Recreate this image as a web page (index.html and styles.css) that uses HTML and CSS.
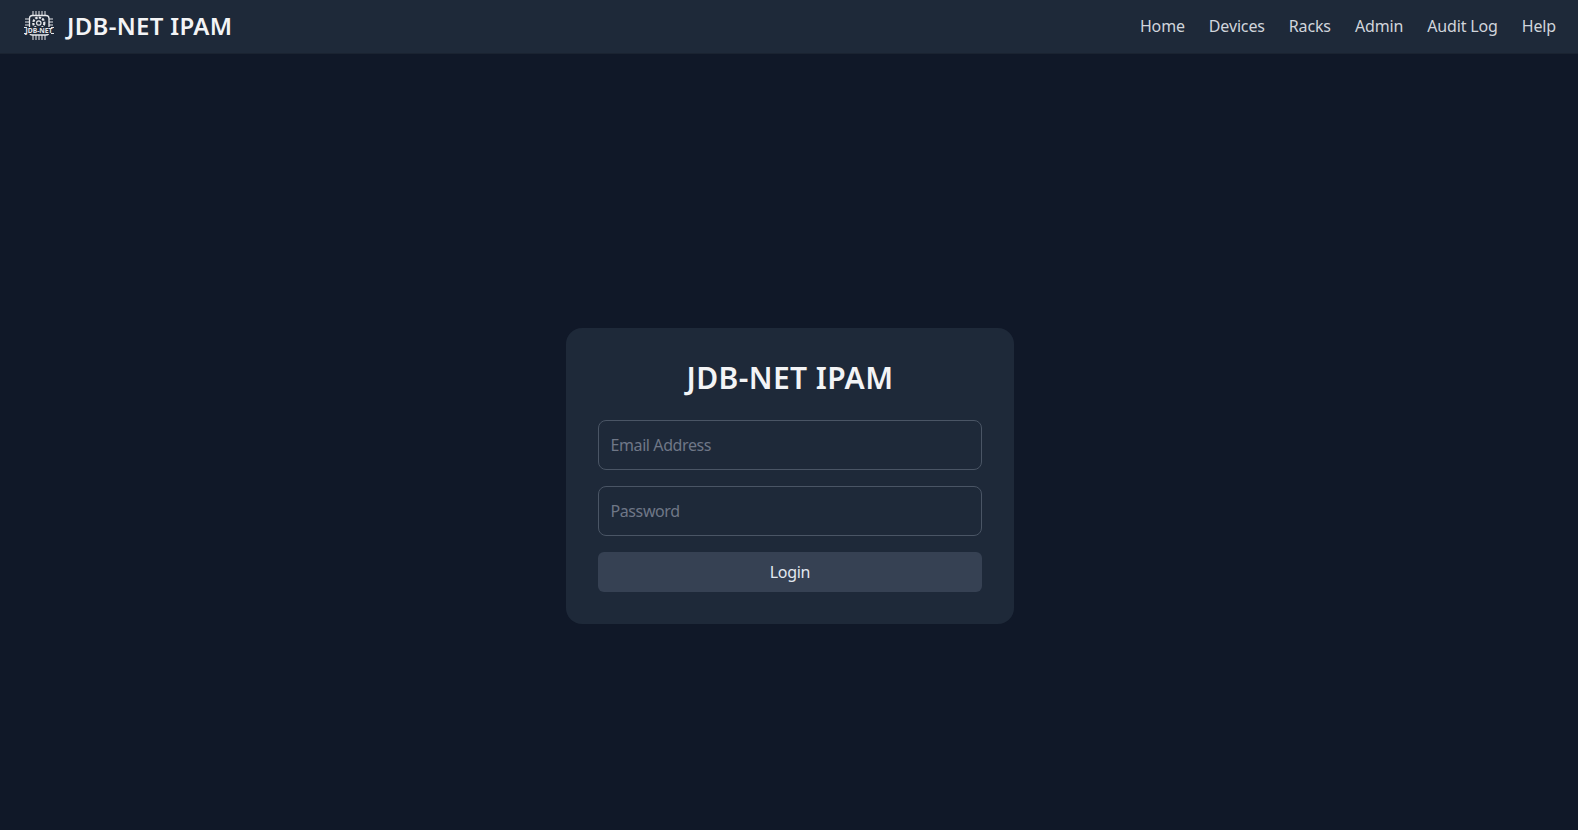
FILE: index.html
```html
<!DOCTYPE html>
<html lang="en">
<head>
<meta charset="utf-8">
<title>JDB-NET IPAM</title>
<link rel="stylesheet" href="styles.css">
</head>
<body>
<nav class="navbar">
  <a class="brand" href="#">
    <svg class="logo" viewBox="0 0 32 32" fill="none" stroke="#e5e7eb">
      <path stroke-width="1" d="M10 1v4.500M13 1v4.500M16 1v4.500M19 1v4.500M22 1v4.500M10 25v5M13 25v5M16 25v5M19 25v5M22 25v5M2 9h4.500M2 12h4.500M2 15h4.500M26 9h4M26 12h4M26 15h4"/>
      <rect x="6.500" y="5.500" width="19.500" height="19.500" rx="3" stroke-width="1.300"/>
      <circle cx="15.800" cy="13" r="5.500" stroke-width="2.200" stroke-dasharray="2.400 1.200"/>
      <circle cx="15.800" cy="13" r="2.200" stroke-width="1.200"/>
      <rect x="1" y="17" width="30" height="7" fill="#1e2939" stroke="none"/>
      <path stroke-width="1" d="M1 17.500h3M1 23.500h3M28 17.500h3M28 23.500h3"/>
      <text class="logo-text" x="16" y="23" text-anchor="middle" textLength="27" lengthAdjust="spacingAndGlyphs">JDB-NET</text>
    </svg>
    <span class="brand-name">JDB-NET IPAM</span>
  </a>
  <div class="nav-links">
    <a href="#">Home</a>
    <a href="#">Devices</a>
    <a href="#">Racks</a>
    <a href="#">Admin</a>
    <a href="#">Audit Log</a>
    <a href="#">Help</a>
  </div>
</nav>
<main class="page">
  <form class="card">
    <h1 class="card-title">JDB-NET IPAM</h1>
    <input class="field" type="email" placeholder="Email Address">
    <input class="field" type="password" placeholder="Password">
    <button class="submit" type="button">Login</button>
  </form>
</main>
</body>
</html>
```
FILE: styles.css
```css
* { box-sizing: border-box; }
html, body { height: 100%; }
body {
  margin: 0;
  background: #101828;
  color: #d1d5dc;
  font-family: "Noto Sans", "Open Sans", sans-serif;
  overflow: hidden;
}
a { text-decoration: none; color: inherit; }
.navbar {
  height: 54px;
  background: #1e2939;
  display: flex;
  align-items: center;
  justify-content: space-between;
  padding: 0 22px 1px 23px;
  border-bottom: 1px solid #1a2331;
}
.brand { display: flex; align-items: center; gap: 12px; }
.logo { width: 32px; height: 32px; display: block; }
.logo-text { font-family: "Noto Sans", sans-serif; font-size: 7px; font-weight: 700; fill: #e5e7eb; stroke: none; }
.brand-name { font-size: 24px; line-height: 32px; margin-top: -1px; font-weight: 600; letter-spacing: 0.3px; color: #f3f4f6; }
.nav-links { display: flex; gap: 24px; font-size: 16px; letter-spacing: -0.15px; color: #d1d5dc; }
.page { display: flex; justify-content: center; padding: 274px 0 0 2px; }
.card {
  width: 448px;
  height: 296px;
  background: #1e2939;
  border-radius: 16px;
  padding: 32px;
  display: flex;
  flex-direction: column;
}
.card-title {
  margin: 0 0 24px;
  height: 36px;
  line-height: 36px;
  text-align: center;
  font-size: 30px;
  font-weight: 600;
  letter-spacing: 0.4px;
  color: #f3f4f6;
}
.field {
  height: 50px;
  margin-bottom: 16px;
  padding: 0 11.5px;
  background: #1e2939;
  border: 1px solid #4a5565;
  border-radius: 8px;
  color: #e5e7eb;
  font: inherit;
  font-size: 16px;
  letter-spacing: -0.4px;
}
.field::placeholder { color: #6f7787; opacity: 1; }
.submit {
  height: 40px;
  border: 0;
  border-radius: 6px;
  background: #364153;
  color: #e2e8f0;
  font: inherit;
  font-size: 16px;
  letter-spacing: -0.3px;
}
```
